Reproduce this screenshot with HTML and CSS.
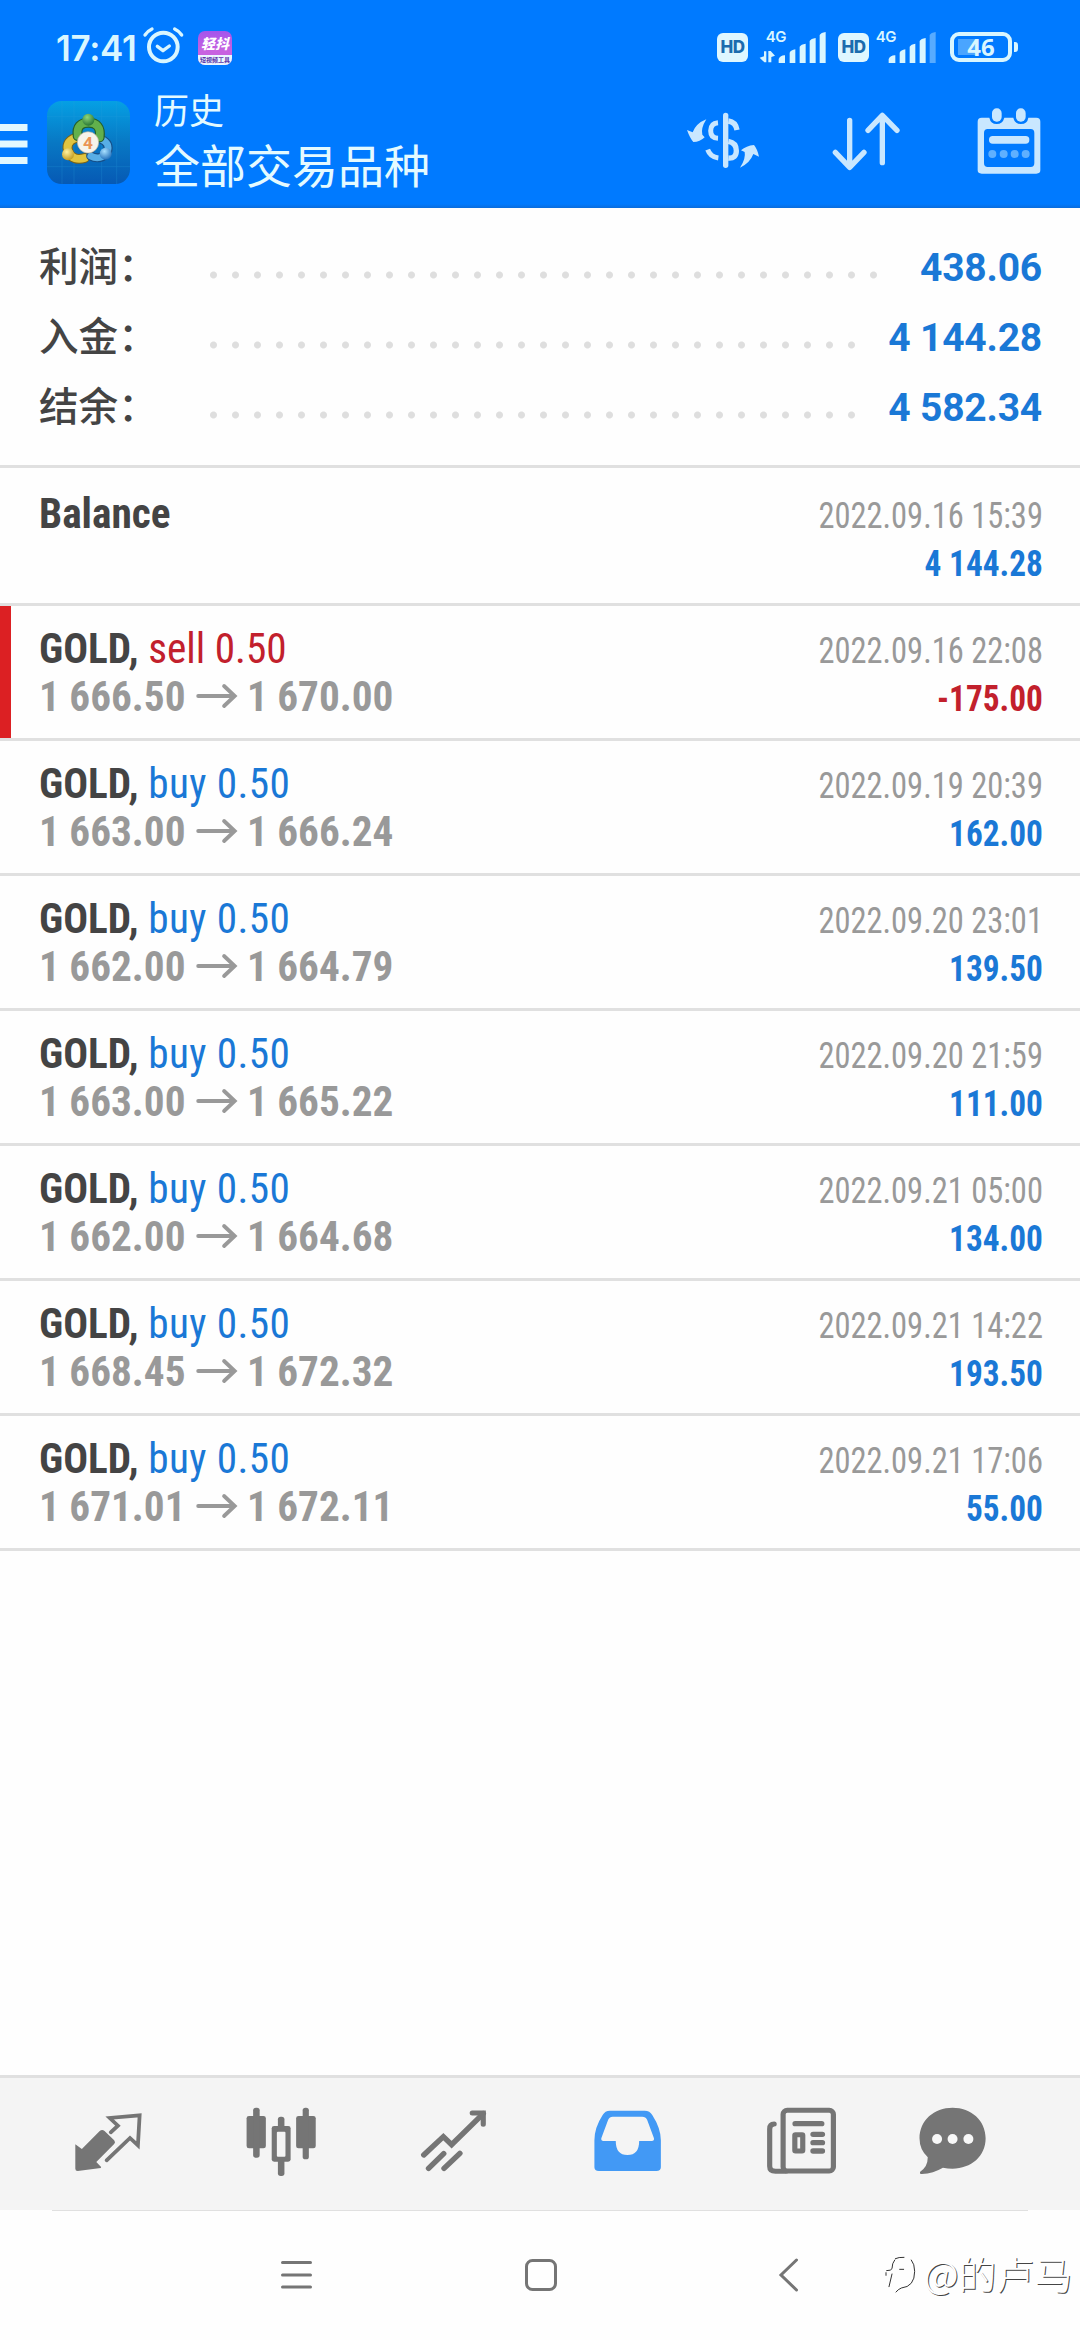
FILE: index.html
```html
<!DOCTYPE html>
<html lang="zh-CN">
<head>
<meta charset="utf-8">
<title>历史</title>
<link rel="stylesheet" href="styles.css">
</head>
<body>
<div class="screen">
  <header class="header">
    <div class="status">
      <span class="clock">17:41</span>
      <svg class="alarm" width="42" height="42" viewBox="337 18 126 126">
        <g fill="none" stroke="#d9f6ff" stroke-linecap="round" stroke-linejoin="round">
          <circle cx="401" cy="84" r="43" stroke-width="12"/>
          <path d="M383 82l17 13 19-14" stroke-width="10"/>
          <path d="M346 48q8-12 21-18M435 30q13 6 21 18" stroke-width="10"/>
        </g>
      </svg>
      <div class="badge-app"><span class="badge-top">轻抖</span><span class="badge-bottom">短视频工具</span></div>
      <div class="status-right">
        <span class="hd">HD</span>
        <svg class="signal" width="70" height="44" viewBox="297 75 210 132">
          <text class="net" x="317" y="125">4G</text>
          <g fill="#d9f6ff">
            <path d="M299 173l13-4v-15h7v33h-6zM325 187v-34h7l13 14-11 4v16z"/>
            <path d="M356 189v-12q6-12 19-11v23zM389 189v-31q4-8 17-10v41zM419 189v-49q4-7 18-9v58zM449 189v-66q4-7 18-9v75zM479 189v-84q4-7 18-9v93z"/>
          </g>
        </svg>
        <span class="hd">HD</span>
        <svg class="signal2" width="66" height="44" viewBox="636 75 198 132">
          <text class="net" x="644" y="125">4G</text>
          <g fill="#d9f6ff">
            <path d="M683 189v-12q6-12 20-11v23zM716 189v-31q4-8 17-10v41zM746 189v-49q4-7 17-9v58zM776 189v-66q4-7 18-9v75z"/>
            <path d="M806 189v-84q4-7 18-9v93z" opacity=".4"/>
          </g>
        </svg>
        <div class="battery"><span>46</span></div>
      </div>
    </div>
    <div class="appbar">
      <svg class="menu" width="28" height="116" viewBox="0 92 28 116"><path d="M0 124h27.500v7H0zM0 140.500h27.500v7H0zM0 157h27.500v7H0z" fill="#e2f8ff"/></svg>
      <svg class="logo" width="83" height="116" viewBox="51 216 249 348">
        <defs>
          <linearGradient id="sky" x1="0" y1="0" x2="0" y2="1"><stop offset="0" stop-color="#05a0e4"/><stop offset=".5" stop-color="#0878c4"/><stop offset="1" stop-color="#0659b4"/></linearGradient>
          <radialGradient id="g" cx=".4" cy=".3" r=".8"><stop offset="0" stop-color="#8fd67a"/><stop offset="1" stop-color="#1c6b2c"/></radialGradient>
          <radialGradient id="y" cx=".4" cy=".3" r=".8"><stop offset="0" stop-color="#fff3a0"/><stop offset="1" stop-color="#b88f10"/></radialGradient>
          <radialGradient id="b" cx=".4" cy=".3" r=".8"><stop offset="0" stop-color="#a8e0ff"/><stop offset="1" stop-color="#1565b5"/></radialGradient>
        </defs>
        <rect x="51" y="243" width="249" height="249" rx="44" fill="url(#sky)"/>
        <path d="M96 243v249M132 243v249M215 243v249M260 243v249M51 290h249M51 440h249" stroke="#2aa0dd" stroke-width="2" opacity=".35"/>
        <g fill="none" stroke-linecap="round">
          <path d="M136 354c-22 8-28 24-20 42 8 20 28 24 48 18" stroke="#7c6415" stroke-width="30"/>
          <path d="M136 354c-22 8-28 24-20 42 8 20 28 24 48 18" stroke="#e0c440" stroke-width="24"/>
          <path d="M214 358c20 8 24 22 18 38-10 18-32 22-50 12" stroke="#164f88" stroke-width="27"/>
          <path d="M214 358c20 8 24 22 18 38-10 18-32 22-50 12" stroke="#58aee6" stroke-width="20"/>
          <path d="M143 348c-4-28 9-40 33-40s37 14 33 44" stroke="#245f2c" stroke-width="30"/>
          <path d="M143 348c-4-28 9-40 33-40s37 14 33 44" stroke="#62b04c" stroke-width="23"/>
        </g>
        <circle cx="175" cy="299" r="18" fill="url(#g)"/>
        <circle cx="114" cy="403" r="18" fill="url(#y)"/>
        <circle cx="227" cy="401" r="18" fill="url(#b)"/>
        <circle cx="174" cy="367" r="32" fill="#f6f3ea" stroke="#b9b29c" stroke-width="2"/>
        <text class="four" x="174" y="386" text-anchor="middle">4</text>
      </svg>
      <div class="titles"><div class="title-small">历史</div><div class="title-big">全部交易品种</div></div>
      <svg width="96" height="96" viewBox="42 306 288 288">
        <g fill="#c9e7ff">
          <path d="M78 390l17 7q10-27 41-39-17 27-12 46l7 8q-14 14-34 14-10-11-19-36z"/>
          <path d="M294 470l-17-8q-10 27-40 41 18-27 14-47l-11-5q16-14 39-16 10 12 15 35z"/>
        </g>
        <g fill="none" stroke="#c9e7ff">
          <path d="M194 346v150" stroke-width="16" stroke-linecap="round"/>
          <path d="M171 368q-22 2-22 24t22 23" stroke-width="15"/>
          <path d="M202 363q22 3 26 27" stroke-width="16"/>
          <path d="M140 449q8 22 32 25" stroke-width="15"/>
          <path d="M202 424q24 4 24 28t-24 22" stroke-width="16"/>
        </g>
      </svg>
      <svg width="96" height="96" viewBox="471 306 288 288">
        <path d="M566 361v140M523 457l43 45 43-45M664 488V348M621 391l43-45 44 45" fill="none" stroke="#c9e7ff" stroke-width="16" stroke-linecap="round" stroke-linejoin="round"/>
      </svg>
      <svg width="96" height="96" viewBox="900 306 288 288">
        <path fill-rule="evenodd" fill="#c9e7ff" d="M962 353h23q4 19 22 19t23-19h27q4 19 23 19t22-19h24q12 0 12 12v146q0 10-12 10H962q-12 0-12-10V365q0-12 12-12zM980 387q-11 0-11 12v90q0 12 11 12h129q11 0 11-12v-90q0-12-11-12z"/>
        <rect x="993" y="325" width="29" height="40" rx="14" fill="#c9e7ff"/>
        <rect x="1065" y="325" width="29" height="40" rx="14" fill="#c9e7ff"/>
        <rect x="984" y="408" width="121" height="23" rx="11" fill="#c9e7ff"/>
        <g fill="#5fb0ff"><circle cx="994" cy="462" r="12"/><circle cx="1028" cy="462" r="12"/><circle cx="1061" cy="462" r="12"/><circle cx="1094" cy="462" r="12"/></g>
      </svg>
    </div>
  </header>

  <section class="summary">
    <div class="sum-row"><span class="sum-label">利润：</span><span class="dots"></span><span class="sum-value">438.06</span></div>
    <div class="sum-row"><span class="sum-label">入金：</span><span class="dots"></span><span class="sum-value">4 144.28</span></div>
    <div class="sum-row"><span class="sum-label">结余：</span><span class="dots"></span><span class="sum-value">4 582.34</span></div>
  </section>

  <main class="deals">
    <div class="deal balance"><div class="left"><div class="sym">Balance</div></div><div class="right"><div class="date">2022.09.16 15:39</div><div class="profit">4 144.28</div></div></div>
    <div class="deal loss"><div class="left"><div class="sym">GOLD, <span class="sell">sell 0.50</span></div><div class="price"><span>1 666.50</span><svg class="arrow" width="44" height="24" viewBox="0 0 44 24"><path d="M2 12h37M29 2l11 10-11 10"/></svg><span>1 670.00</span></div></div><div class="right"><div class="date">2022.09.16 22:08</div><div class="profit neg">-175.00</div></div></div>
    <div class="deal"><div class="left"><div class="sym">GOLD, <span class="buy">buy 0.50</span></div><div class="price"><span>1 663.00</span><svg class="arrow" width="44" height="24" viewBox="0 0 44 24"><path d="M2 12h37M29 2l11 10-11 10"/></svg><span>1 666.24</span></div></div><div class="right"><div class="date">2022.09.19 20:39</div><div class="profit">162.00</div></div></div>
    <div class="deal"><div class="left"><div class="sym">GOLD, <span class="buy">buy 0.50</span></div><div class="price"><span>1 662.00</span><svg class="arrow" width="44" height="24" viewBox="0 0 44 24"><path d="M2 12h37M29 2l11 10-11 10"/></svg><span>1 664.79</span></div></div><div class="right"><div class="date">2022.09.20 23:01</div><div class="profit">139.50</div></div></div>
    <div class="deal"><div class="left"><div class="sym">GOLD, <span class="buy">buy 0.50</span></div><div class="price"><span>1 663.00</span><svg class="arrow" width="44" height="24" viewBox="0 0 44 24"><path d="M2 12h37M29 2l11 10-11 10"/></svg><span>1 665.22</span></div></div><div class="right"><div class="date">2022.09.20 21:59</div><div class="profit">111.00</div></div></div>
    <div class="deal"><div class="left"><div class="sym">GOLD, <span class="buy">buy 0.50</span></div><div class="price"><span>1 662.00</span><svg class="arrow" width="44" height="24" viewBox="0 0 44 24"><path d="M2 12h37M29 2l11 10-11 10"/></svg><span>1 664.68</span></div></div><div class="right"><div class="date">2022.09.21 05:00</div><div class="profit">134.00</div></div></div>
    <div class="deal"><div class="left"><div class="sym">GOLD, <span class="buy">buy 0.50</span></div><div class="price"><span>1 668.45</span><svg class="arrow" width="44" height="24" viewBox="0 0 44 24"><path d="M2 12h37M29 2l11 10-11 10"/></svg><span>1 672.32</span></div></div><div class="right"><div class="date">2022.09.21 14:22</div><div class="profit">193.50</div></div></div>
    <div class="deal"><div class="left"><div class="sym">GOLD, <span class="buy">buy 0.50</span></div><div class="price"><span>1 671.01</span><svg class="arrow" width="44" height="24" viewBox="0 0 44 24"><path d="M2 12h37M29 2l11 10-11 10"/></svg><span>1 672.11</span></div></div><div class="right"><div class="date">2022.09.21 17:06</div><div class="profit">55.00</div></div></div>
  </main>

  <nav class="tabs">
    <svg viewBox="64 54 502 396" preserveAspectRatio="none">
      <path d="M219 253l19 14 52-54q7-6 14 0l28 28q5 6 0 11l-52 54 14 15-1 3-67 9q-7 0-7-7z" fill="#757575"/>
      <path d="M322 217l21-20-24-23 87-8-5 90-23-22-68 67" fill="none" stroke="#757575" stroke-width="11" stroke-linecap="round"/>
    </svg>
    <svg viewBox="566 54 502 396" preserveAspectRatio="none">
      <g fill="#757575"><rect x="716" y="168" width="56" height="97" rx="7"/><rect x="735" y="143" width="19" height="150" rx="8"/><rect x="860" y="168" width="57" height="97" rx="7"/><rect x="879" y="143" width="18" height="155" rx="8"/><rect x="789" y="198" width="55" height="107" rx="7"/><rect x="807" y="170" width="19" height="178" rx="8"/></g>
      <rect x="804" y="215" width="25" height="75" rx="3" fill="#f4f4f4"/>
    </svg>
    <svg viewBox="1067 54 502 396" preserveAspectRatio="none">
      <path d="M1232 285l57-55 24 24 92-93M1246 325l44-44M1291 325l46-45" fill="none" stroke="#757575" stroke-width="16" stroke-linecap="round"/>
      <path d="M1373 159h32v34" fill="none" stroke="#757575" stroke-width="15" stroke-linecap="round"/>
    </svg>
    <svg viewBox="0 54 501.400 396" preserveAspectRatio="none">
      <path fill-rule="evenodd" fill="#4299f5" d="M203 152h101q15 0 22 13 25 40 25 76v81q0 11-13 11H171q-13 0-13-11v-81q0-38 24-76 7-13 21-13zM211 170q-9 0-13 9l-20 56q-1 8 6 8h36q0 42 34 42t34-42h37q7 0 6-8l-20-56q-4-9-14-9z"/>
    </svg>
    <svg viewBox="501.400 54 501.400 396" preserveAspectRatio="none">
      <g fill="none" stroke="#757575">
        <rect x="705" y="151" width="146" height="182" rx="12" stroke-width="15"/>
        <path d="M679 192q-13 0-13 15v112q0 15 17 15h30" stroke-width="15" stroke-linecap="round"/>
        <path d="M740 191h77M792 223h27M792 248h27M792 273h27" stroke-width="16" stroke-linecap="round"/>
        <rect x="739" y="224" width="23" height="49" stroke-width="15" rx="2"/>
      </g>
    </svg>
    <svg viewBox="1002.800 54 501.400 396" preserveAspectRatio="none">
      <path d="M1199 143c54 0 96 38 96 92s-42 91-96 91q-14 0-28-3-28 17-61 19-8 0-5-7 22-14 22-43-24-23-24-57c0-54 42-92 96-92z" fill="#757575"/>
      <g fill="#f8f8f8"><ellipse cx="1154" cy="237" rx="14.500" ry="15"/><ellipse cx="1199" cy="237" rx="14.500" ry="15"/><ellipse cx="1245" cy="237" rx="14.500" ry="15"/></g>
    </svg>
  </nav>
  <div class="navbar">
    <svg width="36" height="36" viewBox="0 0 36 36"><path d="M4.500 5.500h28M4.500 18h28M4.500 30h28"/></svg>
    <svg class="home" width="36" height="36" viewBox="0 0 36 36"><rect x="3.500" y="3.500" width="29" height="29" rx="6"/></svg>
    <svg width="36" height="36" viewBox="0 0 36 36"><path d="M25.500 3L10 18l15.500 15"/></svg>
  </div>
  <div class="watermark">
    <svg width="40" height="42" viewBox="48 42 120 126"><g fill="none" stroke="#333" stroke-width="3" stroke-linecap="round"><path d="M82 56q10-5 26-4M130 60q10 12 10 34 0 46-40 50-10 4-16 12M56 92q14 0 16-6 0-16 8-26M54 98v8M72 102l-9 38M95 88h12"/></g></svg>
    <span>@的卢马</span>
  </div>
</div>
</body>
</html>
```
FILE: styles.css
```css
* { box-sizing: border-box; }
body { margin: 0; background: #fefefe; font-family: Roboto, "Noto Sans CJK SC", sans-serif; }
svg { display: block; flex: none; overflow: visible; }
.screen { position: relative; width: 1080px; height: 2340px; display: flex; flex-direction: column; overflow: hidden; }

.header { height: 208px; background: linear-gradient(#007aff 0 204px, #0a6cdc 208px); }
.status { height: 92px; padding-left: 56px; display: flex; align-items: center; color: #d9f6ff; }
.clock { width: 86px; font: 600 35px/40px Inter, sans-serif; letter-spacing: -.3px; padding-top: 4px; }
.badge-app { width: 34px; height: 34px; margin: 4px 0 0 14px; border-radius: 7px; overflow: hidden; background: linear-gradient(#a455ec, #c862e0 60%); display: flex; flex-direction: column; }
.badge-top { height: 24px; font: italic 900 14px/25px "Noto Sans CJK SC", sans-serif; color: #fff; text-align: center; }
.badge-bottom { height: 10px; background: #ecf5ff; font: 700 6px/10px "Noto Sans CJK SC", sans-serif; color: #5a35a8; text-align: center; white-space: nowrap; }
.status-right { margin-left: auto; padding-right: 68px; padding-top: 2px; display: flex; align-items: center; }
.hd { width: 31px; height: 29px; border-radius: 6px; background: #dff7ff; color: #1c6cae; font: 800 17px/29px Inter, sans-serif; text-align: center; letter-spacing: -.5px; }
.signal { margin: 0 9px 0 11px; }
.signal2 { margin: 0 11px 0 4px; }
.net { font: 600 45px Inter, sans-serif; fill: #d9f6ff; letter-spacing: -1px; }
.battery { position: relative; width: 62px; height: 30px; border: 4px solid #d9f6ff; border-radius: 9px; font: 700 24px/22px "Noto Sans", sans-serif; text-align: center; background: linear-gradient(#4aa5ff, #4aa5ff) 4px 3px / 18px 16px no-repeat; }
.battery::after { content: ""; position: absolute; left: 60px; top: 6px; width: 4px; height: 10px; border-radius: 0 3px 3px 0; background: #d9f6ff; }

.appbar { height: 116px; padding-right: 23px; display: flex; align-items: center; gap: 47px; color: #e4faff; }
.logo { margin-left: -28px; }
.titles { flex: 1; margin-left: -23px; align-self: flex-start; font-family: "Noto Sans CJK SC", sans-serif; white-space: nowrap; }
.title-small { font-size: 35px; line-height: 42px; margin-top: -4px; }
.title-big { font-size: 46px; line-height: 56px; margin-top: 5px; }
.four { font: 700 52px Roboto, sans-serif; fill: #ea9455; }

.summary { height: 260px; padding: 25px 38px 0 39px; border-bottom: 3px solid #e0e0e0; }
.sum-row { height: 70px; display: flex; align-items: center; }
.sum-label { width: 163px; margin-top: -8px; font: 500 39.6px/70px "Noto Sans CJK SC", sans-serif; color: #444; white-space: nowrap; }
.dots { flex: 1; height: 8px; margin: 14px 29px 0 0; background: radial-gradient(circle at 11.5px 4px, #dedede 3px, transparent 4px) 0 0 / 22px 8px repeat-x; }
.sum-value { font-weight: 700; font-size: 39px; letter-spacing: -.2px; color: #1a78d6; }

.deal { height: 135px; padding: 18px 37px 0 39px; display: flex; justify-content: space-between; border-bottom: 3px solid #e0e0e0; font-family: "Roboto Condensed", Roboto, sans-serif; white-space: nowrap; }
.balance { height: 138px; padding-top: 21px; }
.loss { background: linear-gradient(#dc2023, #dc2023) 0 0 / 11px 132px no-repeat; }
.left { transform: scaleX(.959); transform-origin: left; }
.sym { font-size: 43px; line-height: 48px; font-weight: 700; color: #444; }
.sym span { font-weight: 400; }
.sym .buy { color: #1a78d6; letter-spacing: .4px; }
.sell { color: #c2202c; }
.price { display: flex; align-items: center; font-size: 43px; line-height: 48px; font-weight: 700; color: #999; }
.arrow { margin: 0 9px 0 11px; fill: none; stroke: #999; stroke-width: 4px; stroke-linecap: round; }
.right { text-align: right; padding-top: 3px; font-size: 36px; line-height: 48px; }
.date { color: #999; transform: scaleX(.902); transform-origin: right; }
.profit { color: #1a78d6; font-weight: 700; transform: scaleX(.925); transform-origin: right; }
.profit.neg { color: #c2202c; }

.tabs { margin-top: auto; height: 135px; padding: 0 22px; border-top: 3px solid #e0e0e0; background: #f4f4f4; display: grid; grid-template-columns: repeat(6, 1fr); }
.tabs svg { width: 100%; height: 132px; }
.navbar { height: 130px; display: flex; justify-content: space-between; align-items: center; padding: 0 273px 0 278px; background: linear-gradient(#e0e0e0, #e0e0e0) 52px 0 / 976px 1px no-repeat; }
.navbar svg { fill: none; stroke: #757575; stroke-width: 3px; stroke-linecap: round; }
.navbar .home { margin-right: 4px; }
.watermark { position: absolute; left: 884px; top: 2254px; display: flex; color: #fff; font: 300 38px/42px "Noto Sans CJK SC", sans-serif; text-shadow: 1px 1px 0 #444; }
.watermark span { margin-top: -2px; }
```
